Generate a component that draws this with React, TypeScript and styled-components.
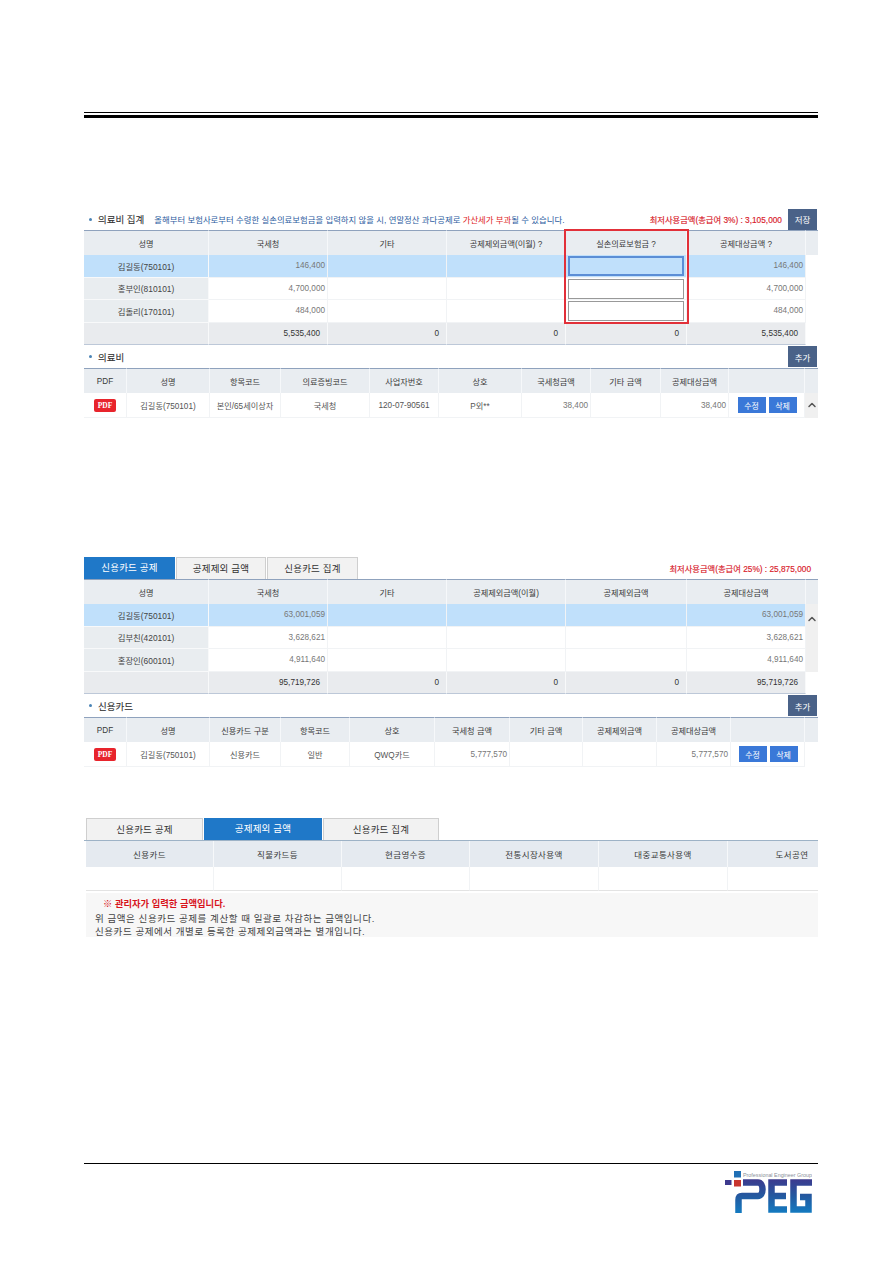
import React from 'react';
import styled, { createGlobalStyle } from 'styled-components';
import { ChevronUp } from 'lucide-react';

const GlobalStyle = createGlobalStyle`
    html, body {
        margin: 0;
        padding: 0;
        background: #ffffff;
    }
    body {
        font-family: "Liberation Sans", "Noto Sans CJK KR", sans-serif;
        color: #333333;
    }
`;

const Page = styled.div`
    width: 893px;
    height: 1262px;
    padding: 112px 75px 0 84px;
    box-sizing: border-box;
    overflow: hidden;
`;

const TopRule = styled.div`
    height: 1px;
    margin-bottom: 2px;
    background: #000;
`;

const TopRuleThick = styled.div`
    height: 3px;
    background: #000;
`;

const Section = styled.section<{ $top: number }>`
    margin-top: ${p => p.$top}px;
    position: relative;
`;

const TitleBar = styled.div<{ $height?: number }>`
    height: ${p => p.$height ?? 22}px;
    display: flex;
    align-items: center;
    font-size: 9.5px;
`;

const Dot = styled.span`
    width: 3px;
    height: 3px;
    border-radius: 50%;
    background: #4a83b5;
    margin: 0 6px 0 5px;
`;

const Title = styled.span`
    color: #333;
    font-size: 9.5px;
    -webkit-text-stroke: 0.1px #333;
`;

const Notice = styled.span`
    margin-left: 10px;
    color: #2b5b9e;
    font-size: 8.4px;
    white-space: nowrap;
    em {
        font-style: normal;
        color: #e01c24;
    }
`;

const Limit = styled.span`
    margin-left: auto;
    margin-right: 6px;
    color: #d8202a;
    font-size: 8.3px;
    white-space: nowrap;
    -webkit-text-stroke: 0.15px #d8202a;
`;

const ActionButton = styled.button`
    width: 29px;
    height: 21px;
    margin-right: 1px;
    margin-left: auto;
    padding: 0;
    border: 0;
    background: #4a6288;
    color: #fff;
    font-family: inherit;
    font-size: 8.5px;
    ${Limit} + & {
        margin-left: 0;
    }
`;

const TableWrap = styled.div`
    position: relative;
`;

const ClipWrap = styled.div`
    overflow: hidden;
    padding-left: 2px;
    border-top: 1.5px solid #9db2c6;
`;

const Table = styled.table<{ $width?: number }>`
    table-layout: fixed;
    width: ${p => p.$width ?? 734}px;
    border-collapse: separate;
    border-spacing: 0;
    font-size: 8.2px;
`;

const Head = styled.th`
    height: 25px;
    padding: 0;
    background: #e9edf1;
    border-top: 1px solid #8fa2bd;
    border-right: 1px solid #f6f8fa;
    box-sizing: border-box;
    font-weight: 400;
    color: #3a3a3a;
    white-space: nowrap;
    &:last-child {
        border-right: 0;
    }
`;

const WideHead = styled(Head)`
    height: 26px;
    border-top: 0;
    background: #e5eaf0;
    font-size: 8.5px;
    letter-spacing: 0.4px;
`;

const Cell = styled.td<{ $kind?: 'name' | 'num' | 'total' | 'input' | 'bar' | 'tall' | 'last'; $selected?: boolean }>`
    padding: 0;
    height: 22.5px;
    box-sizing: border-box;
    text-align: center;
    white-space: nowrap;
    border-right: 1px solid #f1f3f5;
    border-bottom: 1px solid #f1f3f5;
    color: #555;
    background: ${p => (p.$selected ? '#c0e0fb' : '#fff')};
    ${p => p.$kind === 'name' && `
        background: ${p.$selected ? '#c0e0fb' : '#e9edf0'};
        color: #444;
        font-size: 8.4px;
        border-bottom-color: #f8f9fa;
        border-right-color: #f8f9fa;
    `}
    ${p => p.$kind === 'num' && `
        text-align: right;
        padding-right: 2px;
        color: #777;
    `}
    ${p => p.$kind === 'total' && `
        text-align: right;
        padding-right: 7px;
        background: #e9ebee;
        color: #333;
        border-right-color: #f8f9fa;
        border-bottom: 1px solid #bdc8d8;
    `}
    ${p => p.$kind === 'input' && `
        padding: 1px 2px 0;
    `}
    ${p => p.$kind === 'bar' && `
        background: #fff;
        border: 0;
    `}
    ${p => p.$kind === 'tall' && `
        height: 25px;
    `}
    ${p => p.$kind === 'last' && `
        height: 24px;
        border-bottom-color: #e3e3e3;
    `}
`;

const ScrollCell = styled.td<{ $top?: number }>`
    padding: ${p => p.$top ?? 0}px 0 0;
    background: #f0f0f0;
    text-align: center;
    vertical-align: ${p => (p.$top ? 'top' : 'middle')};
    color: #555;
`;

const AmountInput = styled.input<{ $focused?: boolean }>`
    display: block;
    width: 100%;
    height: 20px;
    padding: 0;
    box-sizing: border-box;
    background: ${p => (p.$focused ? 'transparent' : '#fff')};
    border: ${p => (p.$focused ? '2px solid #5b8ed6' : '1px solid #999')};
    outline: 0;
`;

const RedBox = styled.div`
    position: absolute;
    left: 480px;
    top: -1px;
    width: 125px;
    height: 95px;
    box-sizing: border-box;
    border: 2px solid #e23039;
    pointer-events: none;
`;

const PdfBadge = styled.span`
    display: inline-block;
    width: 22px;
    height: 13px;
    line-height: 13px;
    border-radius: 2px;
    background: #e8242c;
    color: #fff;
    font-family: "Liberation Serif", serif;
    font-size: 7.5px;
    font-weight: 700;
    text-align: center;
`;

const RowActions = styled.div`
    display: flex;
    justify-content: center;
    gap: 3px;
    padding-left: 1px;
`;

const SmallButton = styled.button`
    width: 28px;
    height: 16px;
    padding: 0;
    border: 0;
    background: #3a78d8;
    color: #fff;
    font-family: inherit;
    font-size: 8px;
`;

const TabBar = styled.div<{ $indent?: number }>`
    display: flex;
    align-items: flex-end;
    gap: 1px;
    padding-left: ${p => p.$indent ?? 0}px;
    height: 22px;
`;

const Tab = styled.div<{ $active?: boolean; $width: number }>`
    width: ${p => p.$width}px;
    height: 22px;
    line-height: 21px;
    box-sizing: border-box;
    text-align: center;
    font-size: 9.5px;
    letter-spacing: 0.2px;
    white-space: nowrap;
    background: ${p => (p.$active ? '#1f78c8' : '#f2f2f2')};
    color: ${p => (p.$active ? '#fff' : '#333')};
    border: ${p => (p.$active ? '0' : '1px solid #cfcfcf')};
    border-bottom: 0;
`;

const TabLimit = styled(Limit)`
    position: absolute;
    right: 7px;
    top: 5px;
    margin: 0;
`;

const NoteBox = styled.div`
    margin: 2px 0 0 2px;
    height: 44px;
    overflow: hidden;
    padding: 5px 0 0 9px;
    box-sizing: border-box;
    background: #f7f7f7;
    font-size: 9.5px;
    letter-spacing: 0.56px;
    line-height: 13.5px;
    color: #444;
    white-space: nowrap;
`;

const NoteAlert = styled.div`
    padding-left: 8px;
    color: #d8141c;
    font-size: 9.3px;
    letter-spacing: 0;
    font-weight: 700;
`;

const FooterRule = styled.div`
    margin-top: 226px;
    height: 1px;
    background: #000;
`;

const LogoRow = styled.div`
    display: flex;
    justify-content: flex-end;
    padding: 6px 6px 0 0;
`;

function PegLogo() {
    return (
        <svg width="87" height="44" viewBox="0 0 87 44">
            <defs>
                <linearGradient id="peg" gradientUnits="userSpaceOnUse" x1="0" y1="9" x2="0" y2="42">
                    <stop offset="0" stopColor="#3d3a8e" />
                    <stop offset="0.5" stopColor="#24589f" />
                    <stop offset="1" stopColor="#1479bf" />
                </linearGradient>
            </defs>
            <rect x="9" y="1" width="7" height="6.5" fill="#1f6fb5" />
            <rect x="0" y="10" width="6.5" height="5" fill="#3d3a8e" />
            <rect x="9" y="10" width="7" height="6.5" fill="#c8352e" />
            <text x="18" y="6.7" fontFamily="Liberation Sans, sans-serif" fontSize="5" fill="#8a8f99" textLength="69" lengthAdjust="spacingAndGlyphs">
                Professional Engineer Group
            </text>
            <path
                d="M18 12.5H33C39 12.5 39 26 33 26H17C14 26 13.5 28 13.5 30V43"
                fill="none"
                stroke="url(#peg)"
                strokeWidth="6.5"
            />
            <path d="M62 12.5H46.5V39.5H62M46.5 26H61" fill="none" stroke="url(#peg)" strokeWidth="6.5" />
            <path d="M87 12.5H68.5V39.5H83.5V27H75" fill="none" stroke="url(#peg)" strokeWidth="6.5" />
        </svg>
    );
}

const summaryWidths = [125, 119, 119, 119, 121, 119, 12];
const summaryRows = [
    ['김길동(750101)', '146,400'],
    ['홍부인(810101)', '4,700,000'],
    ['김돌리(170101)', '484,000'],
];
const cardRows = [
    ['김길동(750101)', '63,001,059'],
    ['김부친(420101)', '3,628,621'],
    ['홍장인(600101)', '4,911,640'],
];
const deductionHeads = ['신용카드', '직불카드등', '현금영수증', '전통시장사용액', '대중교통사용액', '도서공연'];

function Cols({ widths }: { widths: number[] }) {
    return (
        <colgroup>
            {widths.map((w, i) => (
                <col key={i} width={w} />
            ))}
        </colgroup>
    );
}

function App() {
    return (
        <Page>
            <GlobalStyle />
            <TopRule />
            <TopRuleThick />

            <Section $top={90}>
                <TitleBar>
                    <Dot />
                    <Title>의료비 집계</Title>
                    <Notice>
                        올해부터 보험사로부터 수령한 실손의료보험금을 입력하지 않을 시, 연말정산 과다공제로 <em>가산세가 부과</em>될 수 있습니다.
                    </Notice>
                    <Limit>최저사용금액(총급여 3%) : 3,105,000</Limit>
                    <ActionButton>저장</ActionButton>
                </TitleBar>
                <TableWrap>
                    <Table>
                        <Cols widths={summaryWidths} />
                        <thead>
                            <tr>
                                <Head>성명</Head>
                                <Head>국세청</Head>
                                <Head>기타</Head>
                                <Head>공제제외금액(이월) ?</Head>
                                <Head>실손의료보험금 ?</Head>
                                <Head>공제대상금액 ?</Head>
                                <Head />
                            </tr>
                        </thead>
                        <tbody>
                            {summaryRows.map(([name, amount], i) => (
                                <tr key={name}>
                                    <Cell $kind="name" $selected={i === 0}>{name}</Cell>
                                    <Cell $kind="num" $selected={i === 0}>{amount}</Cell>
                                    <Cell $selected={i === 0} />
                                    <Cell $selected={i === 0} />
                                    <Cell $kind="input" $selected={i === 0}>
                                        <AmountInput $focused={i === 0} readOnly />
                                    </Cell>
                                    <Cell $kind="num" $selected={i === 0}>{amount}</Cell>
                                    <Cell $kind="bar" />
                                </tr>
                            ))}
                            <tr>
                                <Cell $kind="total" />
                                <Cell $kind="total">5,535,400</Cell>
                                <Cell $kind="total">0</Cell>
                                <Cell $kind="total">0</Cell>
                                <Cell $kind="total">0</Cell>
                                <Cell $kind="total">5,535,400</Cell>
                                <Cell $kind="bar" />
                            </tr>
                        </tbody>
                    </Table>
                    <RedBox />
                </TableWrap>
                <TitleBar $height={23}>
                    <Dot />
                    <Title>의료비</Title>
                    <ActionButton>추가</ActionButton>
                </TitleBar>
                <Table>
                    <Cols widths={[43, 83, 71, 89, 69, 83, 69, 70, 68, 76, 13]} />
                    <thead>
                        <tr>
                            <Head>PDF</Head>
                            <Head>성명</Head>
                            <Head>항목코드</Head>
                            <Head>의료증빙코드</Head>
                            <Head>사업자번호</Head>
                            <Head>상호</Head>
                            <Head>국세청금액</Head>
                            <Head>기타 금액</Head>
                            <Head>공제대상금액</Head>
                            <Head />
                            <Head />
                        </tr>
                    </thead>
                    <tbody>
                        <tr>
                            <Cell $kind="tall"><PdfBadge>PDF</PdfBadge></Cell>
                            <Cell>김길동(750101)</Cell>
                            <Cell>본인/65세이상자</Cell>
                            <Cell>국세청</Cell>
                            <Cell>120-07-90561</Cell>
                            <Cell>P외**</Cell>
                            <Cell $kind="num">38,400</Cell>
                            <Cell />
                            <Cell $kind="num">38,400</Cell>
                            <Cell>
                                <RowActions>
                                    <SmallButton>수정</SmallButton>
                                    <SmallButton>삭제</SmallButton>
                                </RowActions>
                            </Cell>
                            <ScrollCell><ChevronUp size={12} strokeWidth={3} /></ScrollCell>
                        </tr>
                    </tbody>
                </Table>
            </Section>

            <Section $top={139}>
                <TabBar>
                    <Tab $active $width={91}>신용카드 공제</Tab>
                    <Tab $width={90}>공제제외 금액</Tab>
                    <Tab $width={91}>신용카드 집계</Tab>
                </TabBar>
                <TabLimit>최저사용금액(총급여 25%) : 25,875,000</TabLimit>
                <Table>
                    <Cols widths={summaryWidths} />
                    <thead>
                        <tr>
                            <Head>성명</Head>
                            <Head>국세청</Head>
                            <Head>기타</Head>
                            <Head>공제제외금액(이월)</Head>
                            <Head>공제제외금액</Head>
                            <Head>공제대상금액</Head>
                            <Head />
                        </tr>
                    </thead>
                    <tbody>
                        {cardRows.map(([name, amount], i) => (
                            <tr key={name}>
                                <Cell $kind="name" $selected={i === 0}>{name}</Cell>
                                <Cell $kind="num" $selected={i === 0}>{amount}</Cell>
                                <Cell $selected={i === 0} />
                                <Cell $selected={i === 0} />
                                <Cell $selected={i === 0} />
                                <Cell $kind="num" $selected={i === 0}>{amount}</Cell>
                                {i === 0 && (
                                    <ScrollCell rowSpan={3} $top={9}>
                                        <ChevronUp size={12} strokeWidth={3} />
                                    </ScrollCell>
                                )}
                            </tr>
                        ))}
                        <tr>
                            <Cell $kind="total" />
                            <Cell $kind="total">95,719,726</Cell>
                            <Cell $kind="total">0</Cell>
                            <Cell $kind="total">0</Cell>
                            <Cell $kind="total">0</Cell>
                            <Cell $kind="total">95,719,726</Cell>
                            <Cell $kind="bar" />
                        </tr>
                    </tbody>
                </Table>
                <TitleBar $height={23}>
                    <Dot />
                    <Title>신용카드</Title>
                    <ActionButton>추가</ActionButton>
                </TitleBar>
                <Table>
                    <Cols widths={[43, 83, 71, 69, 85, 75, 73, 74, 74, 74, 13]} />
                    <thead>
                        <tr>
                            <Head>PDF</Head>
                            <Head>성명</Head>
                            <Head>신용카드 구분</Head>
                            <Head>항목코드</Head>
                            <Head>상호</Head>
                            <Head>국세청 금액</Head>
                            <Head>기타 금액</Head>
                            <Head>공제제외금액</Head>
                            <Head>공제대상금액</Head>
                            <Head />
                            <Head />
                        </tr>
                    </thead>
                    <tbody>
                        <tr>
                            <Cell $kind="tall"><PdfBadge>PDF</PdfBadge></Cell>
                            <Cell>김길동(750101)</Cell>
                            <Cell>신용카드</Cell>
                            <Cell>일반</Cell>
                            <Cell>QWQ카드</Cell>
                            <Cell $kind="num">5,777,570</Cell>
                            <Cell />
                            <Cell />
                            <Cell $kind="num">5,777,570</Cell>
                            <Cell>
                                <RowActions>
                                    <SmallButton>수정</SmallButton>
                                    <SmallButton>삭제</SmallButton>
                                </RowActions>
                            </Cell>
                            <Cell $kind="bar" />
                        </tr>
                    </tbody>
                </Table>
            </Section>

            <Section $top={51}>
                <TabBar $indent={2}>
                    <Tab $width={117}>신용카드 공제</Tab>
                    <Tab $active $width={118}>공제제외 금액</Tab>
                    <Tab $width={116}>신용카드 집계</Tab>
                </TabBar>
                <ClipWrap>
                    <Table $width={770}>
                        <Cols widths={[128, 128, 128, 129, 129, 128]} />
                        <thead>
                            <tr>
                                {deductionHeads.map(label => (
                                    <WideHead key={label}>{label}</WideHead>
                                ))}
                            </tr>
                        </thead>
                        <tbody>
                            <tr>
                                {deductionHeads.map(label => (
                                    <Cell key={label} $kind="last" />
                                ))}
                            </tr>
                        </tbody>
                    </Table>
                </ClipWrap>
                <NoteBox>
                    <NoteAlert>※ 관리자가 입력한 금액입니다.</NoteAlert>
                    <div>위 금액은 신용카드 공제를 계산할 때 일괄로 차감하는 금액입니다.</div>
                    <div>신용카드 공제에서 개별로 등록한 공제제외금액과는 별개입니다.</div>
                </NoteBox>
            </Section>

            <FooterRule />
            <LogoRow>
                <PegLogo />
            </LogoRow>
        </Page>
    );
}

export default App;
